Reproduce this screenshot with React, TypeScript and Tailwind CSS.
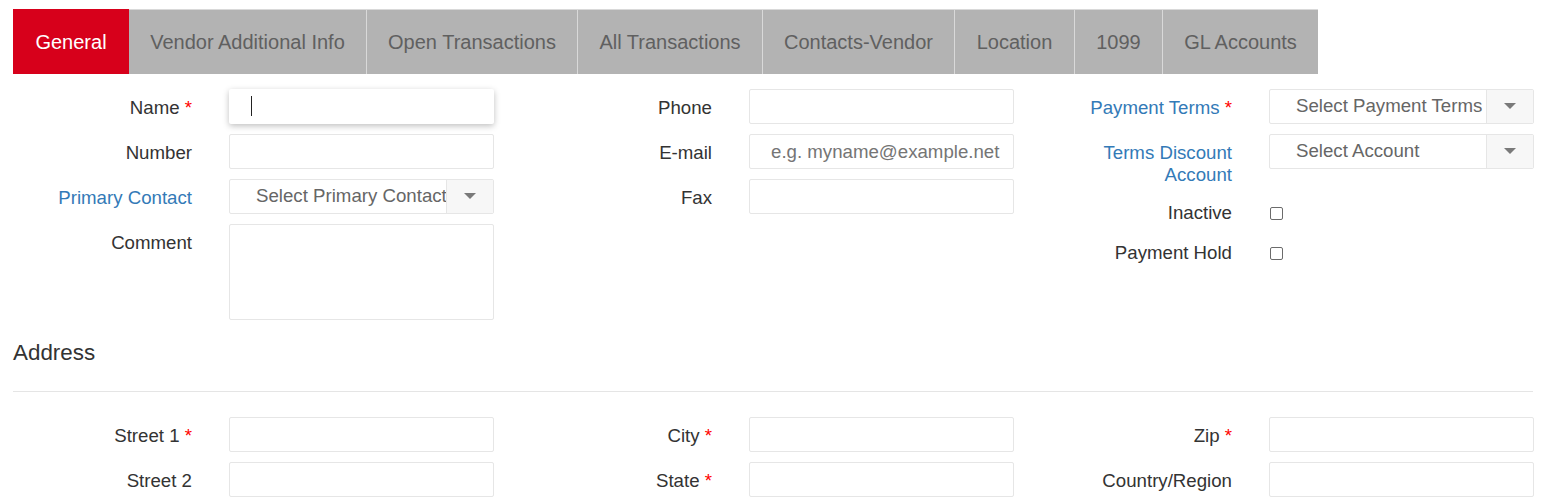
import React from 'react';

const TABS: [string, string][] = [
  ['General', 'w-[116px]'],
  ['Vendor Additional Info', 'w-[237px]'],
  ['Open Transactions', 'w-[211px]'],
  ['All Transactions', 'w-[185px]'],
  ['Contacts-Vendor', 'w-[192px]'],
  ['Location', 'w-[120px]'],
  ['1099', 'w-[88px]'],
  ['GL Accounts', 'w-[156px]'],
];

const inputBase =
  'h-[35px] w-[265px] rounded-[2px] border border-[#e6e6e6] bg-white text-[18.67px] text-[#555] outline-none placeholder:text-[#757575]';

function Req() {
  return <span className="text-[#f00]"> *</span>;
}

function Label({ children, blue, shift }: { children: React.ReactNode; blue?: boolean; shift?: boolean }) {
  return (
    <div
      className={`w-[192px] text-right text-[18.67px] leading-[22px] ${shift ? 'translate-y-[1px]' : ''} ${blue ? 'text-[#337ab7]' : 'text-[#333]'}`}
    >
      {children}
    </div>
  );
}

function TextRow({ label, blue, placeholder, focused }: { label: React.ReactNode; blue?: boolean; placeholder?: string; focused?: boolean }) {
  return (
    <div className="flex h-[35px] items-center">
      <Label blue={blue} shift>{label}</Label>
      <div className="relative ml-[37px]">
        <input
          className={`${inputBase} pl-[21px] pr-[8px] ${focused ? 'border-transparent shadow-[0_2px_6px_rgba(0,0,0,0.25)]' : ''}`}
          placeholder={placeholder}
        />
        {focused && <span className="absolute left-[22px] top-[7px] h-[20px] w-px bg-[#222]" />}
      </div>
    </div>
  );
}

function SelectBox({ text }: { text: string }) {
  return (
    <div className="flex h-[35px] w-[265px] overflow-hidden rounded-[2px] border border-[#e6e6e6] bg-white">
      <div className="flex-1 overflow-hidden whitespace-nowrap pl-[26px] pt-[4px] text-[18.67px] leading-[24px] text-[#666]">{text}</div>
      <div className="flex w-[47px] shrink-0 items-center justify-center border-l border-[#e6e6e6] bg-[#f7f7f7]">
        <svg width="12" height="7" viewBox="0 0 12 7">
          <path d="M0 0 L12 0 L6 6 Z" fill="#7a7a7a" />
        </svg>
      </div>
    </div>
  );
}

function SelectRow({ label, blue, text }: { label: React.ReactNode; blue?: boolean; text: string }) {
  return (
    <div className="flex h-[35px] items-center">
      <Label blue={blue} shift>{label}</Label>
      <div className="ml-[37px]">
        <SelectBox text={text} />
      </div>
    </div>
  );
}

function CheckRow({ label }: { label: string }) {
  return (
    <div className="flex h-[36px] items-center">
      <Label>{label}</Label>
      <div className="ml-[38px] flex items-center">
        <input
          type="checkbox"
          className="m-0 h-[13px] w-[13px] appearance-none rounded-[2px] border border-[#6b6b6b] bg-white"
        />
      </div>
    </div>
  );
}

export default function App() {
  return (
    <div className="h-[504px] w-[1544px] overflow-hidden bg-white pt-[9px] font-['Liberation_Sans',Arial,sans-serif]">
      {/* Tabs */}
      <div className="ml-[13px] flex h-[65px]">
        {TABS.map(([t, w], i) =>
          i === 0 ? (
            <div key={t} className={`flex h-full ${w} items-center justify-center bg-[#d7001b] text-[20px] text-white`}>
              {t}
            </div>
          ) : (
            <div
              key={t}
              className={`flex h-full ${w} items-center justify-center whitespace-nowrap border-t border-[#d9d9d9] bg-[#b3b3b3] text-[20px] text-[#606060] ${i > 1 ? 'border-l' : ''}`}
            >
              {t}
            </div>
          )
        )}
      </div>

      {/* General form */}
      <div className="mt-[15px] grid grid-cols-[520px_520px_504px]">
        <div className="flex flex-col gap-[10px]">
          <TextRow label={<>Name<Req /></>} focused />
          <TextRow label="Number" />
          <SelectRow label="Primary Contact" blue text="Select Primary Contact" />
          <div className="flex items-start">
            <div className="pt-[8px]">
              <Label>Comment</Label>
            </div>
            <textarea className="ml-[37px] h-[96px] w-[265px] resize-none rounded-[2px] border border-[#e6e6e6] outline-none" />
          </div>
        </div>

        <div className="flex flex-col gap-[10px]">
          <TextRow label="Phone" />
          <TextRow label="E-mail" placeholder="e.g. myname@example.net" />
          <TextRow label="Fax" />
        </div>

        <div className="flex flex-col">
          <SelectRow label={<>Payment Terms<Req /></>} blue text="Select Payment Terms" />
          <div className="mt-[10px] flex items-start">
            <div className="pt-[8px]">
              <Label blue>Terms Discount Account</Label>
            </div>
            <div className="ml-[37px]">
              <SelectBox text="Select Account" />
            </div>
          </div>
          <div className="mt-[9px]">
            <CheckRow label="Inactive" />
          </div>
          <div className="mt-[4px]">
            <CheckRow label="Payment Hold" />
          </div>
        </div>
      </div>

      {/* Address */}
      <div className="mx-[13px] mt-[16px] h-[34px] text-[22.4px] leading-[34px] text-[#333]">Address</div>
      <div className="ml-[13px] mr-[11px] mt-[21px] h-px bg-[#e5e5e5]" />

      <div className="mt-[25px] grid grid-cols-[520px_520px_504px]">
        <div className="flex flex-col gap-[10px]">
          <TextRow label={<>Street 1<Req /></>} />
          <TextRow label="Street 2" />
        </div>
        <div className="flex flex-col gap-[10px]">
          <TextRow label={<>City<Req /></>} />
          <TextRow label={<>State<Req /></>} />
        </div>
        <div className="flex flex-col gap-[10px]">
          <TextRow label={<>Zip<Req /></>} />
          <TextRow label="Country/Region" />
        </div>
      </div>
    </div>
  );
}
